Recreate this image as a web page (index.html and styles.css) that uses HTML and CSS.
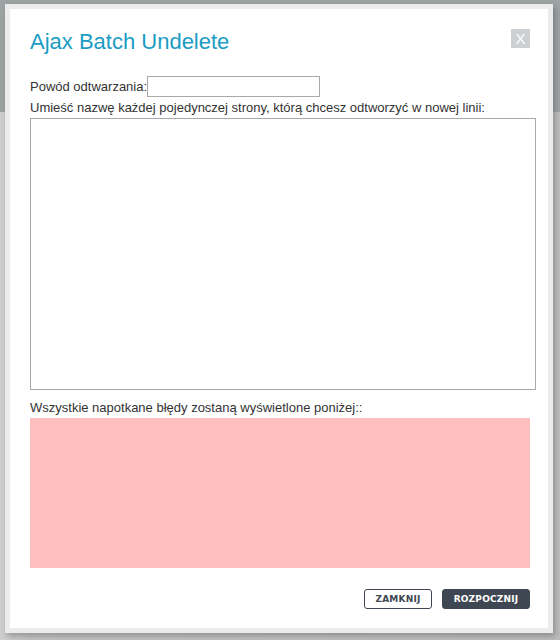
FILE: index.html
```html
<!DOCTYPE html>
<html lang="pl">

<head>
  <meta charset="UTF-8" />
  <title>Ajax Batch Undelete</title>
  <link rel="stylesheet" href="styles.css">
</head>

<body>
  <div class="backdrop">
    <div class="page-top"></div>
    <div class="page-rest"></div>
  </div>

  <div class="dialog">
    <div class="dialog-inner">
      <div class="dialog-head">
        <h1>Ajax Batch Undelete</h1>
        <button class="close">X</button>
      </div>

      <div class="reason-row">
        <label for="reason">Powód odtwarzania:</label><input type="text" id="reason">
      </div>
      <div class="hint">Umieść nazwę każdej pojedynczej strony, którą chcesz odtworzyć w nowej linii:</div>
      <textarea class="pages"></textarea>

      <div class="hint errors-label">Wszystkie napotkane błędy zostaną wyświetlone poniżej::</div>
      <div class="errors"></div>

      <div class="actions">
        <button class="btn btn-light">Zamknij</button>
        <button class="btn btn-dark">Rozpocznij</button>
      </div>
    </div>
  </div>
</body>

</html>
```

FILE: styles.css
```css
html,
body {
  margin: 0;
  height: 100%;
}

body {
  font-family: 'Liberation Sans', Arial, sans-serif;
  background-color: #bfbfbf;
  overflow: hidden;
}

.backdrop {
  position: absolute;
  inset: 0;
  display: flex;
  flex-direction: column;
}

.page-top {
  height: 112px;
  background-color: #9ea4a4;
}

.page-rest {
  flex: 1;
  background: linear-gradient(to right, #cfcfcf 0, #c4c4c4 30px, #bcbcbc 100%);
}

.dialog {
  position: absolute;
  left: 5px;
  top: 4px;
  width: 538px;
  height: 619px;
  border: 5px solid #ececec;
  background-color: #fff;
  box-shadow: 2px 3px 6px rgba(0, 0, 0, 0.25);
}

.dialog-inner {
  padding: 0 12px 0 20px;
}

.dialog-head {
  display: flex;
  justify-content: space-between;
  align-items: flex-start;
  padding-top: 20px;
  height: 57px;
  box-sizing: border-box;
}

.dialog-head h1 {
  margin: 0;
  font-size: 22px;
  font-weight: 400;
  color: #1b9cc4;
  line-height: 26px;
}

.close {
  margin-top: 0;
  margin-right: 6px;
  width: 19px;
  height: 19px;
  padding: 0;
  border: none;
  background-color: #cdd0d3;
  color: #fff;
  font-family: 'Liberation Sans', Arial, sans-serif;
  font-size: 15px;
  line-height: 19px;
}

.reason-row {
  display: flex;
  align-items: center;
  font-size: 13px;
  color: #333;
  margin-top: 10px;
}

.reason-row input {
  width: 173px;
  height: 21px;
  box-sizing: border-box;
  border: 1px solid #a9a9a9;
  margin: 0;
  padding: 0 3px;
}

.hint {
  font-size: 13px;
  color: #333;
  line-height: 21px;
  margin-top: 0;
}

.pages {
  display: block;
  width: 506px;
  height: 272px;
  box-sizing: border-box;
  border: 1px solid #a9a9a9;
  margin: 0;
  resize: none;
}

.errors-label {
  margin-top: 7px;
  line-height: 21px;
}

.errors {
  width: 500px;
  height: 150px;
  background-color: #ffbfbf;
}

.actions {
  display: flex;
  justify-content: flex-end;
  gap: 10px;
  margin-top: 21px;
  padding-right: 6px;
}

.btn {
  height: 20px;
  padding: 0;
  border-radius: 3px;
  font-family: 'DejaVu Sans', sans-serif;
  font-weight: 700;
  font-size: 9px;
  letter-spacing: 0.2px;
  text-transform: uppercase;
  cursor: pointer;
}

.btn-light {
  width: 68px;
  border: 1px solid #3f4752;
  background-color: #fff;
  color: #3f4752;
}

.btn-dark {
  width: 88px;
  border: 1px solid #3f4752;
  background-color: #3f4752;
  color: #fff;
}
```
